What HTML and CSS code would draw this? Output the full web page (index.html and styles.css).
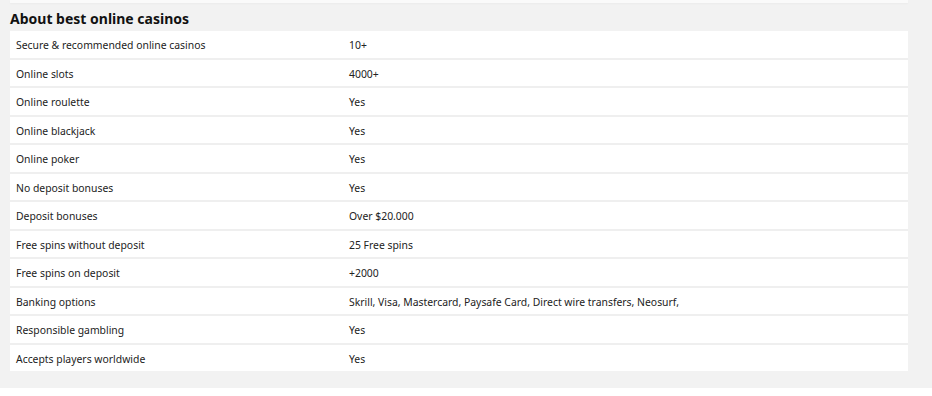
FILE: index.html
```html
<!DOCTYPE html>
<html lang="en">
<head>
<meta charset="utf-8">
<title>About best online casinos</title>
<link rel="stylesheet" href="styles.css">
</head>
<body>
<div class="page">
  <div class="prev-card"></div>
  <h2 class="title">About best online casinos</h2>
  <table class="facts">
    <tbody>
      <tr><td class="k">Secure &amp; recommended online casinos</td><td class="v">10+</td></tr>
      <tr><td class="k">Online slots</td><td class="v">4000+</td></tr>
      <tr><td class="k">Online roulette</td><td class="v">Yes</td></tr>
      <tr><td class="k">Online blackjack</td><td class="v">Yes</td></tr>
      <tr><td class="k">Online poker</td><td class="v">Yes</td></tr>
      <tr><td class="k">No deposit bonuses</td><td class="v">Yes</td></tr>
      <tr><td class="k">Deposit bonuses</td><td class="v">Over $20.000</td></tr>
      <tr><td class="k">Free spins without deposit</td><td class="v">25 Free spins</td></tr>
      <tr><td class="k">Free spins on deposit</td><td class="v">+2000</td></tr>
      <tr><td class="k">Banking options</td><td class="v">Skrill, Visa, Mastercard, Paysafe Card, Direct wire transfers, Neosurf,</td></tr>
      <tr><td class="k">Responsible gambling</td><td class="v">Yes</td></tr>
      <tr><td class="k">Accepts players worldwide</td><td class="v">Yes</td></tr>
    </tbody>
  </table>
</div>
</body>
</html>
```
FILE: styles.css
```css
html, body {
  margin: 0;
  padding: 0;
  background: #ffffff;
}
body {
  font-family: "Noto Sans", "Open Sans", sans-serif;
  color: #222222;
}
.page {
  background: #f2f2f2;
  padding: 0 24px 17px 10px;
}
.prev-card {
  height: 3px;
  background: #fafafa;
  box-shadow: 0 1px 2px rgba(0,0,0,0.03);
}
.title {
  margin: 0;
  height: 28px;
  padding-top: 6px;
  box-sizing: border-box;
  font-size: 14px;
  line-height: 20px;
  font-weight: 700;
  color: #111111;
}
.facts {
  width: 898px;
  border-collapse: collapse;
  background: #ffffff;
  font-size: 10.4px;
}
.facts tr {
  border-bottom: 2px solid #efefef;
}
.facts tr:last-child {
  border-bottom: none;
}
.facts td {
  padding: 7px 6px 5px;
  line-height: 14.5px;
  vertical-align: middle;
}
.facts td.k {
  width: 321px;
}
```
